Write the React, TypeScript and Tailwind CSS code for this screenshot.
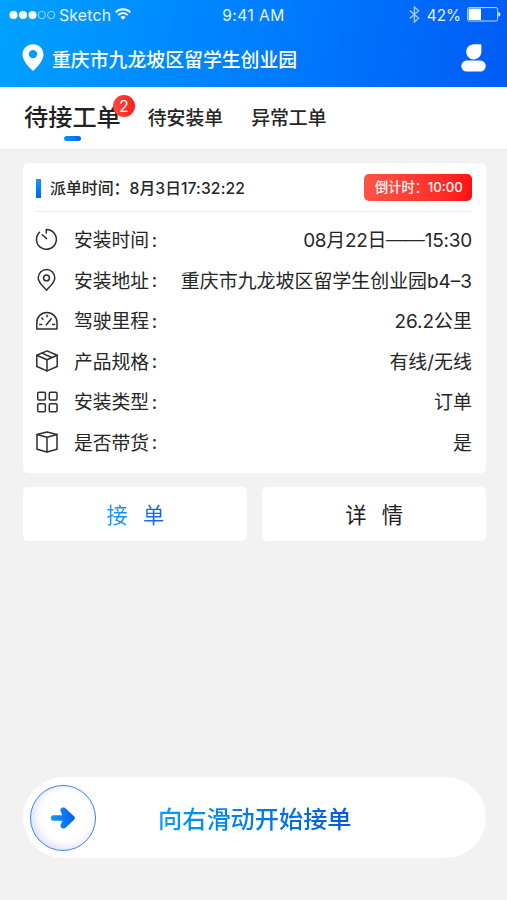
import type { ReactNode } from 'react';

const sans = "font-['Inter','Noto_Sans_CJK_SC',sans-serif]";

function Line({ children }: { children: ReactNode }) {
  return (
    <svg
      className="-ml-[1.5px] h-6 w-6 shrink-0"
      viewBox="0 0 24 24"
      fill="none"
      stroke="#2e2e2e"
      strokeWidth="1.5"
      strokeLinecap="round"
      strokeLinejoin="round"
    >
      {children}
    </svg>
  );
}

const TimerIcon = () => (
  <Line>
    <path d="M4.500 4.300A9.900 9.900 0 1 0 11.300 1.500V5" />
    <path d="M7.300 6.700l4.300 3.900" />
  </Line>
);

const PlaceIcon = () => (
  <Line>
    <path d="M11.500 22.200C8.200 18.500 3.200 14.300 3.200 9.900a8.300 8.300 0 0 1 16.600 0c0 4.400-5 8.600-8.300 12.300z" />
    <circle cx="11.500" cy="9.900" r="2.900" />
  </Line>
);

const GaugeIcon = () => (
  <Line>
    <path d="M1.800 20.100V13.500a10.100 10.100 0 0 1 20.200 0v6.600z" />
    <path d="M11.300 15.800l5-6M12 6.200v1.600M6.800 9l1.100 1.100M4.700 15.500h2M17.600 15.500h2" />
  </Line>
);

const ParcelIcon = () => (
  <Line>
    <path d="M12 1.900l10.200 4.300v11.300L12 21.900 1.800 17.500V6.200z" />
    <path d="M1.800 6.200L12 10.700l10.200-4.500M12 10.700v11.200M7 4.100l9.800 4.400" />
  </Line>
);

const GridIcon = () => (
  <Line>
    <rect x="2.700" y="2.200" width="7.700" height="7.900" rx="1.300" />
    <rect x="14.300" y="2.200" width="7.700" height="7.900" rx="1.300" />
    <rect x="2.700" y="13.800" width="7.700" height="7.900" rx="1.300" />
    <rect x="14.300" y="13.800" width="7.700" height="7.900" rx="1.300" />
  </Line>
);

const BoxIcon = () => (
  <Line>
    <path d="M12 2.100l10 2.500v14.700L12 22 2 19.300V4.600z" />
    <path d="M2 4.600l10 2.600 10-2.600M12 7.200V22" />
  </Line>
);

const rows = [
  {
    icon: <TimerIcon />,
    label: '安装时间',
    value: (
      <>
        <span className="tracking-[-0.300px]">08月22日</span>
        <span className="text-[20px] leading-none font-light tracking-[-1.200px]">——</span>
        <span className="ml-px tracking-[-0.200px]">15:30</span>
      </>
    ),
  },
  { icon: <PlaceIcon />, label: '安装地址', value: '重庆市九龙坡区留学生创业园b4–3' },
  { icon: <GaugeIcon />, label: '驾驶里程', value: '26.2公里' },
  { icon: <ParcelIcon />, label: '产品规格', value: '有线/无线' },
  { icon: <GridIcon />, label: '安装类型', value: '订单' },
  { icon: <BoxIcon />, label: '是否带货', value: '是' },
];

function StatusBar() {
  return (
    <div className="grid h-[31px] grid-cols-3 items-center pr-1.5 pl-[9px] text-[15.800px] leading-none text-white/90">
      <div className="flex items-center">
        <svg className="h-3 w-[47px]" viewBox="0 0 47 12" fill="white">
          <circle cx="4.500" cy="6" r="4" />
          <circle cx="14" cy="6" r="4" />
          <circle cx="23.500" cy="6" r="4" />
          <g fill="none" stroke="white" strokeWidth="0.8" opacity="0.8">
            <circle cx="32.800" cy="6" r="3.700" />
            <circle cx="42.200" cy="6" r="3.700" />
          </g>
        </svg>
        <span className="ml-[3px] tracking-[0.200px]">Sketch</span>
        <svg className="-mt-0.5 ml-1 h-3 w-4" viewBox="0 0 16 12" fill="none" stroke="white" strokeWidth="1.900">
          <path d="M.7 4.300a10.400 10.400 0 0 1 14.600 0M3.300 7.100a6.700 6.700 0 0 1 9.400 0" />
          <path d="M8 11.700L5.400 9.200a3.800 3.800 0 0 1 5.200 0z" fill="white" stroke="none" />
        </svg>
      </div>
      <div className="-ml-[3px] text-center text-[15.500px] tracking-[0.500px]">9:41 AM</div>
      <div className="flex items-center justify-end">
        <svg className="-mt-1 h-[17px] w-[11px] translate-y-px opacity-60" viewBox="0 0 11 17" fill="none" stroke="white" strokeWidth="1.400">
          <path d="M.8 4.600l8.800 7.600-4.200 3.900V.9l4.200 3.900-8.800 7.600" />
        </svg>
        <span className="ml-[7px] text-[15.300px]">42%</span>
        <svg className="-mt-0.5 ml-1.5 h-[15px] w-[34px]" viewBox="0 0 34 15">
          <rect x=".6" y=".6" width="30" height="13.400" rx="1.500" fill="none" stroke="white" strokeOpacity=".75" strokeWidth="1" />
          <rect x="1.600" y="1.600" width="12.400" height="11.400" fill="white" />
          <path d="M31.400 5c2.500.5 2.500 4.200 0 4.700z" fill="white" />
        </svg>
      </div>
    </div>
  );
}

export default function App() {
  return (
    <div className={`flex h-[900px] w-[507px] flex-col overflow-hidden bg-[#f2f2f2] text-[#262626] ${sans}`}>
      <header className="h-[87px] shrink-0 bg-[linear-gradient(100deg,#00a2ff_0%,#0080ff_48%,#005cf5_100%)] text-white">
        <StatusBar />
        <div className="flex h-[54px] items-center pr-[21px] pl-[22px]">
          <svg className="-mt-px h-[27px] w-[22px]" viewBox="0 0 22 27" fill="white">
            <path
              fillRule="evenodd"
              d="M11 .3C5 .3.5 4.800.5 10.600c0 5.100 4.200 10.400 9.300 15.500.8.7 1.600.7 2.400 0 5.100-5.100 9.300-10.400 9.300-15.500C21.500 4.800 17 .3 11 .3zm0 5.600a4.200 4.200 0 1 1 0 8.400 4.200 4.200 0 0 1 0-8.400z"
            />
          </svg>
          <span className="ml-[8px] flex-1 pt-[5px] text-[18.880px] leading-7 font-medium">重庆市九龙坡区留学生创业园</span>
          <svg className="h-7 w-[25px]" viewBox="0 0 25 28" fill="white">
            <path d="M12.500 .2h6.500c.9 0 1.400.5 1.400 1.400V8a7.600 7.600 0 1 1-7.900-7.800z" />
            <rect x=".3" y="16.600" width="24.400" height="11" rx="5.300" />
          </svg>
        </div>
      </header>

      <nav className="flex h-[63px] shrink-0 items-center border-b border-[#ededed] bg-white pl-6">
        <div className="relative h-full pt-[13px] text-[24.200px] leading-9 font-medium text-[#222]">
          待接工单
          <span className="absolute top-2 left-[89px] flex h-[22px] w-[22px] items-center justify-center rounded-full bg-linear-to-r from-[#ff4a3d] to-[#f81c1c] text-base leading-none font-normal text-white">
            2
          </span>
          <span className="absolute top-[49px] left-10 h-[5px] w-[17px] rounded-full bg-linear-to-r from-[#0a95ff] to-[#0462f0]" />
        </div>
        <span className="ml-[27px] pt-px text-[18.850px] leading-7 font-medium">待安装单</span>
        <span className="ml-7 pt-px text-[18.850px] leading-7 font-medium">异常工单</span>
      </nav>

      <main className="flex flex-1 flex-col pt-[13px] pr-[21.500px] pl-[23px]">
        <section className="h-[310px] rounded-[5px] bg-white pr-[13.500px] pl-[13px]">
          <div className="flex h-[49px] items-center border-b border-[#ececec]">
            <span className="mt-0.5 h-[19px] w-[5px] bg-linear-to-b from-[#109dff] to-[#0563f5]" />
            <span className="ml-[9px] flex-1 pt-[3px] text-[15.900px] leading-6 font-medium">
              派单时间：<span className="text-[15.700px] tracking-[0.100px]">8月3日17:32:22</span>
            </span>
            <span className="flex h-[27px] w-[108px] items-center justify-center rounded-[5px] bg-linear-to-r from-[#ff5246] to-[#ff0d10] pt-0.5 pl-0.5 text-[13.200px] font-medium text-white">
              倒计时：10:00
            </span>
          </div>
          <dl className="pt-[7.500px] text-[18.800px]">
            {rows.map((row) => (
              <div key={row.label} className="flex h-[40.500px] items-center">
                {row.icon}
                <dt className="ml-[15.500px] pt-[3px]">{row.label}</dt>
                <span className="ml-[2.500px] pt-0.5">:</span>
                <dd className="ml-auto pt-[3px] text-[18.950px] whitespace-nowrap">{row.value}</dd>
              </div>
            ))}
          </dl>
        </section>

        <div className="mt-3.5 grid h-[54px] grid-cols-2 gap-[15px]">
          <button className="flex items-center justify-center rounded-[5px] bg-white pt-[3px] pl-px text-[21.300px]">
            <span className="flex gap-[15px] bg-linear-to-r from-[#10a0ff] to-[#1a5cf0] bg-clip-text text-transparent">
              <span>接</span>
              <span>单</span>
            </span>
          </button>
          <button className="flex items-center justify-center gap-[15px] rounded-[5px] bg-white pt-[3px] pl-px text-[21.300px] text-[#1e1e1e]">
            <span>详</span>
            <span>情</span>
          </button>
        </div>

        <div className="mt-auto mb-[42px] flex h-[81px] items-center rounded-full bg-white pl-[7px]">
          <span className="flex h-[66px] w-[66px] items-center justify-center rounded-full border-[1.500px] border-[#3286f4] shadow-[inset_3px_-2px_8px_rgba(90,70,240,0.2)]">
            <svg className="h-[22px] w-[26px]" viewBox="0 0 26 22">
              <defs>
                <linearGradient id="arrow" x1="0" y1="0" x2="1" y2="0">
                  <stop offset="0" stopColor="#0b9dff" />
                  <stop offset="1" stopColor="#0a5cf0" />
                </linearGradient>
              </defs>
              <path
                d="M3.500 8.200H12L11.200 5.600C9.800 3.800 10.300 1.500 12 .7c1.500-.7 2.900-.1 3.900 1L24.300 9.600c.8.8.8 2 0 2.800l-8.500 8.100c-1.200 1.200-2.900 1.500-4.200.5-1.500-1.200-1.400-3.100-.2-4.500l.8-2.700H3.500c-3.600 0-3.600-5.600 0-5.600z"
                fill="url(#arrow)"
              />
            </svg>
          </span>
          <span className="ml-[62px] bg-linear-to-r from-[#0d9cf5] to-[#0559e0] bg-clip-text pt-1 text-[24.200px] leading-9 font-medium text-transparent">
            向右滑动开始接单
          </span>
        </div>
      </main>
    </div>
  );
}
